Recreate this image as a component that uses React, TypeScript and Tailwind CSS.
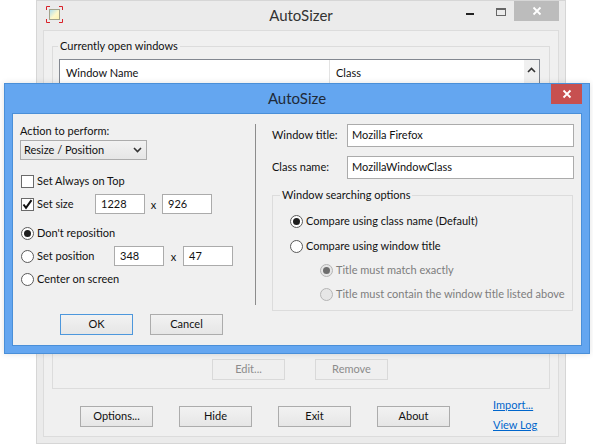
import type { ReactNode } from "react";

const font = { fontFamily: '"Lato", "Noto Sans", sans-serif' };

function Btn({ children, primary, disabled, className = "" }: { children: ReactNode; primary?: boolean; disabled?: boolean; className?: string }) {
  return (
    <div
      className={`flex h-[21px] w-[73px] items-center justify-center border text-[11px] ${
        disabled
          ? "border-[#d9d9d9] bg-[#efefef] text-[#8c8c8c]"
          : primary
            ? "border-[#4d97dc] bg-gradient-to-b from-[#f2f2f2] to-[#e6e6e6] text-[#111]"
            : "border-[#acacac] bg-gradient-to-b from-[#f2f2f2] to-[#e6e6e6] text-[#111]"
      } ${className}`}
    >
      {children}
    </div>
  );
}

function Radio({ checked, disabled, children }: { checked?: boolean; disabled?: boolean; children: ReactNode }) {
  return (
    <div className={`flex h-[14px] items-center gap-[3px] text-[11px] ${disabled ? "text-[#7d7d7d]" : "text-[#111]"}`}>
      <span
        className={`flex h-[13px] w-[13px] shrink-0 items-center justify-center rounded-full border ${
          disabled ? "border-[#b5b5b5] bg-[#e6e6e6]" : "border-[#5a5a5a] bg-white"
        }`}
      >
        {checked && <span className={`h-[7px] w-[7px] rounded-full ${disabled ? "bg-[#6e6e6e]" : "bg-[#1f1f1f]"}`} />}
      </span>
      <span className="whitespace-nowrap">{children}</span>
    </div>
  );
}

function Check({ checked, children }: { checked?: boolean; children: ReactNode }) {
  return (
    <div className="flex h-[14px] items-center gap-[3px] text-[11px] text-[#111]">
      <span className="flex h-[13px] w-[13px] shrink-0 items-center justify-center border border-[#6a6a6a] bg-white">
        {checked && (
          <svg width="11" height="11" viewBox="0 0 11 11">
            <path d="M1.5 5.5 L4 8.8 L9.5 1.2" fill="none" stroke="#111" strokeWidth="2" />
          </svg>
        )}
      </span>
      <span className="whitespace-nowrap">{children}</span>
    </div>
  );
}

function NumBox({ value }: { value: string }) {
  return (
    <div className="flex h-[20px] w-[50px] items-center border border-[#ababab] bg-white pl-[5px] text-[11px] text-[#111]">
      {value}
    </div>
  );
}

function TextBox({ value }: { value: string }) {
  return (
    <div className="flex h-[23px] w-[227px] items-center border border-[#ababab] bg-white pl-[4px] text-[11px] text-[#111]">
      {value}
    </div>
  );
}

function AppIcon() {
  return (
    <svg width="17" height="17" viewBox="0 0 17 17">
      <defs>
        <linearGradient id="ico" x1="0" y1="0" x2="1" y2="1">
          <stop offset="0" stopColor="#a8dcf2" />
          <stop offset="0.55" stopColor="#fdf8cc" />
          <stop offset="1" stopColor="#fbf3b0" />
        </linearGradient>
      </defs>
      <rect x="3.5" y="3.5" width="10" height="10" fill="url(#ico)" stroke="#a3a38c" />
      <path d="M.5 4V.5H4M13 .5h3.5V4M16.5 13v3.5H13M4 16.5H.5V13" fill="none" stroke="#d8222a" />
    </svg>
  );
}

function BackWindow() {
  return (
    <div className="absolute left-[36px] top-0 flex h-[444px] w-[530px] flex-col border border-[#d6d6d6] bg-[#ebebeb] px-[6px] pb-[6px]">
      <div className="relative flex h-[29px] shrink-0 items-center">
        <div className="ml-[3px] mt-[-2px]">
          <AppIcon />
        </div>
        <div className="absolute left-0 right-0 top-[3px] text-center text-[15px] leading-[22px] text-[#333]">AutoSizer</div>
        <div className="absolute right-[85px] top-[12px] h-[2px] w-[8px] bg-[#222]" />
        <div className="absolute right-[53px] top-[7px] h-[8px] w-[10px] border border-[#666] border-t-2" />
        <div className="absolute right-0 top-0 flex h-[20px] w-[45px] items-center justify-center bg-[#bcbcbc]">
          <svg width="10" height="10" viewBox="0 0 10 10">
            <path d="M1.5 1.5l7 7M8.5 1.5l-7 7" stroke="#fff" strokeWidth="1.8" />
          </svg>
        </div>
      </div>
      <div className="flex min-h-0 flex-1 flex-col border border-[#dcdcdc] bg-[#f0f0f0] px-[8px] pt-[7px] pb-[8px]">
        <fieldset className="flex h-[351px] shrink-0 flex-col border border-[#dcdcdc] px-[6px] pb-[8px]">
          <legend className="ml-[-1px] px-[2px] text-[11px] leading-[16px] text-[#111]">Currently open windows</legend>
          <div className="mt-[5px] flex h-[292px] w-[481px] shrink-0 border border-[#828790] bg-white text-[11px] text-[#111]">
            <div className="w-[270px] border-r border-[#e3e3e3] pl-[6px] pt-[5px]">Window Name</div>
            <div className="flex-1 pl-[6px] pt-[5px]">Class</div>
            <div className="flex w-[15px] flex-col items-center bg-[#f0f0f0] pt-[7px]">
              <svg width="9" height="6" viewBox="0 0 9 6">
                <path d="M1 5l3.5-3.5L8 5" fill="none" stroke="#333" strokeWidth="1.6" />
              </svg>
            </div>
          </div>
          <div className="mt-[8px] flex gap-[30px] pl-[153px]">
            <Btn disabled>Edit...</Btn>
            <Btn disabled>Remove</Btn>
          </div>
        </fieldset>
        <div className="mt-[17px] flex items-start gap-[26px] pl-[28px]">
          <Btn>Options...</Btn>
          <Btn>Hide</Btn>
          <Btn>Exit</Btn>
          <Btn>About</Btn>
          <div className="ml-[17px] mt-[-9px] flex flex-col gap-[4px] text-[11px] leading-[16px] text-[#0066cc] underline">
            <span>Import...</span>
            <span>View Log</span>
          </div>
        </div>
      </div>
    </div>
  );
}

function Dialog() {
  return (
    <div className="absolute left-[4px] top-[83px] flex h-[271px] w-[586px] flex-col border border-[#4a8fd8] bg-[#64a6f0] px-[7px] pb-[7px] shadow-[0_0_6px_rgba(0,0,0,0.12)]">
      <div className="relative h-[29px] shrink-0">
        <div className="absolute left-0 right-0 top-[3px] text-center text-[15px] leading-[22px] text-[#1f2a38]">AutoSize</div>
        <div className="absolute right-0 top-0 flex h-[20px] w-[31px] items-center justify-center bg-[#c75050]">
          <svg width="10" height="10" viewBox="0 0 10 10">
            <path d="M1.5 1.5l7 7M8.5 1.5l-7 7" stroke="#fff" strokeWidth="1.8" />
          </svg>
        </div>
      </div>
      <div className="flex min-h-0 flex-1 border border-[#4a8fd8] bg-[#f0f0f0]">
        <div className="flex w-[242px] shrink-0 flex-col pl-[7px] pt-[9px]">
          <div className="text-[11px] leading-[16px] text-[#111]">Action to perform:</div>
          <div className="mt-[1px] flex h-[20px] w-[127px] items-center justify-between border border-[#acacac] bg-gradient-to-b from-[#f2f2f2] to-[#e6e6e6] pl-[3px] pr-[4px] text-[11px] text-[#111]">
            Resize / Position
            <svg width="9" height="6" viewBox="0 0 9 6">
              <path d="M1 1l3.5 3.5L8 1" fill="none" stroke="#333" strokeWidth="1.6" />
            </svg>
          </div>
          <div className="mt-[14px] pl-[1px]">
            <Check>Set Always on Top</Check>
          </div>
          <div className="mt-[6px] flex h-[20px] items-center pl-[1px]">
            <div className="w-[74px]">
              <Check checked>Set size</Check>
            </div>
            <NumBox value="1228" />
            <span className="mt-[2px] w-[17px] text-center text-[11px] text-[#111]">x</span>
            <NumBox value="926" />
          </div>
          <div className="mt-[12px] pl-[1px]">
            <Radio checked>Don't reposition</Radio>
          </div>
          <div className="mt-[6px] flex h-[20px] items-center pl-[1px]">
            <div className="w-[93px]">
              <Radio>Set position</Radio>
            </div>
            <NumBox value="348" />
            <span className="mt-[2px] w-[19px] text-center text-[11px] text-[#111]">x</span>
            <NumBox value="47" />
          </div>
          <div className="mt-[6px] pl-[1px]">
            <Radio>Center on screen</Radio>
          </div>
          <div className="mt-[28px] flex gap-[17px] pl-[40px]">
            <Btn primary>OK</Btn>
            <Btn>Cancel</Btn>
          </div>
        </div>
        <div className="mt-[10px] h-[181px] w-px shrink-0 bg-[#8c8c8c]" />
        <div className="flex flex-1 flex-col pl-[16px] pt-[10px]">
          <div className="flex items-center">
            <span className="w-[75px] text-[11px] text-[#111]">Window title:</span>
            <TextBox value="Mozilla Firefox" />
          </div>
          <div className="mt-[9px] flex items-center">
            <span className="w-[75px] text-[11px] text-[#111]">Class name:</span>
            <TextBox value="MozillaWindowClass" />
          </div>
          <fieldset className="mt-[8px] h-[124px] w-[301px] min-w-0 border border-[#dcdcdc]">
            <legend className="ml-[7px] px-[2px] text-[11px] leading-[16px] text-[#111]">Window searching options</legend>
            <div className="pl-[17px]">
              <div className="mt-[11px]">
                <Radio checked>Compare using class name (Default)</Radio>
              </div>
              <div className="mt-[11px]">
                <Radio>Compare using window title</Radio>
              </div>
              <div className="mt-[10px] pl-[30px]">
                <Radio checked disabled>Title must match exactly</Radio>
              </div>
              <div className="mt-[10px] pl-[30px]">
                <Radio disabled>Title must contain the window title listed above</Radio>
              </div>
            </div>
          </fieldset>
        </div>
      </div>
    </div>
  );
}

export default function App() {
  return (
    <div className="relative h-[444px] w-[593px] overflow-hidden bg-white" style={font}>
      <BackWindow />
      <Dialog />
    </div>
  );
}
